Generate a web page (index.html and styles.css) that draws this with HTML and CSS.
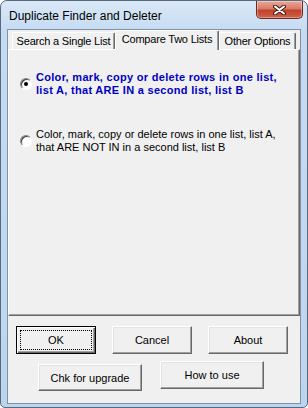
FILE: index.html
```html
<!DOCTYPE html>
<html>
<head>
<meta charset="UTF-8">
<title>Duplicate Finder and Deleter</title>
<link rel="stylesheet" href="styles.css">
</head>
<body>

<div class="window">

<div class="titlebar">
<span class="title">Duplicate Finder and Deleter</span>
<div class="close">
<svg width="13" height="10" viewBox="0 0 13 10">
<path d="M2 1.5 L11 8.5 M11 1.5 L2 8.5" stroke="#3b1d18" stroke-width="4" stroke-linecap="round"/>
<path d="M2 1.5 L11 8.5 M11 1.5 L2 8.5" stroke="#ffffff" stroke-width="2" stroke-linecap="round"/>
</svg>
</div>
</div>

<div class="client">

<!-- TABS -->
<div class="tabs">
<div class="tab tab-search">Search a Single List</div>
<div class="tab tab-compare active">Compare Two Lists</div>
<div class="tab tab-other">Other Options</div>
</div>

<div class="panel">
<div class="option opt-in">
<span class="radio checked"></span>
<span class="opt-text">Color, mark, copy or delete rows in one list, list A, that ARE IN a second list, list B</span>
</div>
<div class="option opt-out">
<span class="radio"></span>
<span class="opt-text">Color, mark, copy or delete rows in one list, list A, that ARE NOT IN in a second list, list B</span>
</div>
</div>

<!-- BUTTONS -->
<div class="buttons">
<div class="row row-main">
<button class="btn default"><span class="focus">OK</span></button>
<button class="btn">Cancel</button>
<button class="btn">About</button>
</div>
<div class="row row-extra">
<button class="btn wide low">Chk for upgrade</button>
<button class="btn wide">How to use</button>
</div>
</div>

</div>
</div>

</body>
</html>
```

FILE: styles.css
```css
body{
margin:0;
width:308px;
height:408px;
overflow:hidden;
background:#fff;
font-family:"Liberation Sans",Arial,sans-serif;
}

.window{
box-sizing:border-box;
width:308px;
height:408px;
border:1px solid #5a6a7e;
border-radius:7px 7px 5px 5px;
padding:0 6px 3px 6px;
background:linear-gradient(#dae8f7,#c5dbf2 30px,#bcd5ef);
display:flex;
flex-direction:column;
}

/* TITLE BAR */
.titlebar{
height:28px;
display:flex;
justify-content:space-between;
align-items:flex-start;
}

.title{
font-size:12px;
color:#000;
padding:8px 0 0 2px;
}

.close{
width:47px;
height:18px;
margin-right:-2px;
box-sizing:border-box;
border:1px solid #6e2a22;
border-top:none;
border-radius:0 0 5px 5px;
background:linear-gradient(#e9a99a,#d97a66 45%,#c0422c 55%,#d2614b);
box-shadow:inset 0 0 0 1px rgba(255,255,255,.35);
display:flex;
align-items:center;
justify-content:center;
}

/* CLIENT */
.client{
flex:1;
border:1px solid #7f91a8;
background:#f0f0f0;
display:flex;
flex-direction:column;
font-size:11px;
}

.tabs{
height:19px;
display:flex;
align-items:flex-end;
padding-left:4px;
letter-spacing:-0.2px;
}

.tab{
box-sizing:border-box;
height:17px;
border:1px solid #fff;
border-bottom:none;
border-right-color:#696969;
border-radius:2px 2px 0 0;
box-shadow:inset -1px 0 #a0a0a0;
text-align:center;
line-height:17px;
color:#000;
white-space:nowrap;
}

.tab-search{width:103px;}
.tab-compare{width:104px;}
.tab-other{width:77px;}

.tab.active{
height:20px;
line-height:16px;
margin-bottom:-1px;
position:relative;
z-index:1;
background:#f0f0f0;
}

.panel{
box-sizing:border-box;
height:267px;
border-top:1px solid #fff;
border-left:1px solid #fff;
border-right:1px solid #696969;
border-bottom:1px solid #696969;
box-shadow:inset -1px -1px #a0a0a0;
padding:21px 0 0 11px;
display:flex;
flex-direction:column;
gap:31px;
}

.option{
display:flex;
align-items:center;
gap:4px;
}

.opt-text{
width:244px;
line-height:13px;
color:#000;
}

.opt-in .opt-text{
font-weight:bold;
letter-spacing:0.3px;
color:#0000c0;
}

.radio{
box-sizing:border-box;
width:12px;
height:12px;
flex:none;
border-radius:50%;
border:1px solid;
border-color:#808080 #fff #fff #808080;
background:#fff;
box-shadow:inset 1px 1px #404040;
display:flex;
align-items:center;
justify-content:center;
}

.radio.checked::after{
content:"";
width:4px;
height:4px;
border-radius:50%;
background:#000;
}

/* BUTTONS */
.buttons{
padding:10px 0 0 8px;
}

.row{
display:flex;
align-items:flex-start;
}

.row-main{gap:16px;}

.row-extra{
gap:18px;
margin-top:7px;
padding-left:22px;
}

.btn{
box-sizing:border-box;
width:80px;
height:28px;
padding:0;
margin:0;
font-family:inherit;
font-size:11px;
color:#000;
background:#f0f0f0;
border:1px solid;
border-color:#fff #696969 #696969 #fff;
box-shadow:inset -1px -1px #a0a0a0,inset 1px 1px #e3e3e3;
}

.btn.wide{width:104px;}
.btn.low{height:27px;margin-top:3px;}

.btn.default{
border:1px solid #000;
box-shadow:inset 1px 1px #fff,inset -1px -1px #696969,inset -2px -2px #a0a0a0;
padding:3px;
}

.focus{
display:flex;
align-items:center;
justify-content:center;
height:100%;
border:1px dotted #000;
box-sizing:border-box;
}
```
